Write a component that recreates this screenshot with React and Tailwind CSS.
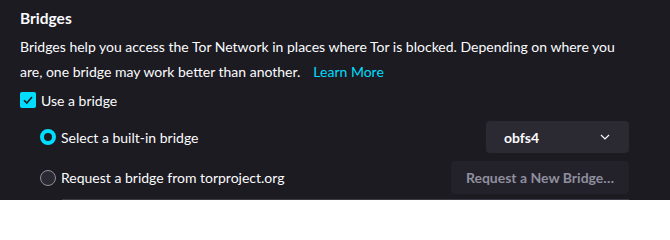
import { useState } from "react";

function Radio({ checked }) {
  return checked ? (
    <span className="w-4 h-4 rounded-full border-[4px] border-[#00ddff] bg-[#1c1b22] shrink-0"></span>
  ) : (
    <span className="w-4 h-4 rounded-full border border-[#8f8f9d] bg-[#2b2a33] shrink-0"></span>
  );
}

export default function App() {
  const [useBridge] = useState(true);

  return (
    <div
      className="w-[670px] h-[200px] overflow-hidden bg-[#1c1b22] text-[#fbfbfe] pl-5 pr-[41px] pt-[7px]"
      style={{ fontFamily: 'Lato, sans-serif' }}
    >
      <h2 className="text-[15.5px] font-bold leading-[22px]">Bridges</h2>
      <p className="text-[14px] leading-[25px] mt-[5px]">
        Bridges help you access the Tor Network in places where Tor is blocked. Depending on where you
        are, one bridge may work better than another.
        <a className="text-[#00ddff] ml-[13px]" href="#">
          Learn More
        </a>
      </p>
      <label className="flex items-center gap-[5px] mt-[5px] text-[14px] h-[22px]">
        <span className="w-4 h-4 rounded-[2px] bg-[#00ddff] flex items-center justify-center">
          {useBridge && (
            <svg width="12" height="12" viewBox="0 0 12 12" fill="none">
              <path d="M2 6.2 L4.8 9 L10 3" stroke="#1c1b22" strokeWidth="1.6" />
            </svg>
          )}
        </span>
        Use a bridge
      </label>
      <div className="pl-5 mt-[10px] flex flex-col gap-2">
        <div className="flex items-center justify-between h-8">
          <div className="flex items-center gap-[5px] text-[14px]">
            <Radio checked />
            Select a built-in bridge
          </div>
          <div className="w-[143px] h-8 rounded-[4px] bg-[#2b2a33] flex items-center justify-between pl-[18px] pr-[19px] text-[14px] font-bold">
            obfs4
            <svg width="10" height="6" viewBox="0 0 10 6" fill="none">
              <path d="M1 1 L5 5 L9 1" stroke="#fbfbfe" strokeWidth="1.2" />
            </svg>
          </div>
        </div>
        <div className="flex items-center justify-between h-[33px]">
          <div className="flex items-center gap-[5px] text-[14px]">
            <Radio />
            Request a bridge from torproject.org
          </div>
          <button className="w-[178px] h-[33px] rounded-[4px] bg-[#23222b] text-[#8f8f9d] text-[14px] font-bold">
            Request a New Bridge…
          </button>
        </div>
      </div>
      <div className="ml-[42px] mt-[5px] h-8 border-t border-[#3a3944] bg-[#1f1e26]"></div>
    </div>
  );
}
